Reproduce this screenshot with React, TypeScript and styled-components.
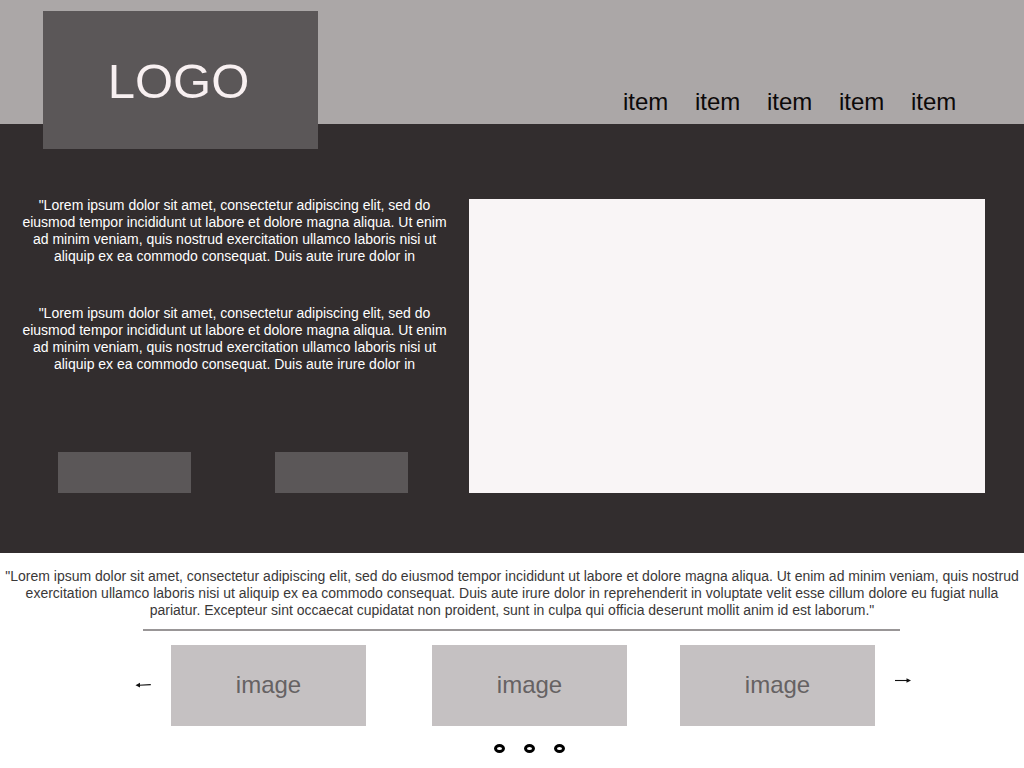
import React from "react";
import styled, { createGlobalStyle } from "styled-components";

const GlobalStyle = createGlobalStyle`
  * {
    box-sizing: border-box;
  }
  body {
    margin: 0;
    background: #ffffff;
    font-family: "Liberation Sans", Arial, sans-serif;
    font-size: 14px;
    line-height: 17px;
  }
  button {
    border: 0;
    padding: 0;
    background: none;
    font: inherit;
    cursor: pointer;
  }
`;

const Header = styled.header`
  display: flex;
  justify-content: space-between;
  align-items: flex-start;
  height: 124px;
  padding: 11px 41px 0 43px;
  background: #aba7a7;
`;

const Logo = styled.a`
  position: relative;
  display: flex;
  align-items: center;
  justify-content: center;
  width: 275px;
  height: 138px;
  padding: 2px 4px 0 0;
  background: #5b5758;
  color: #f8f0f1;
  font-size: 49px;
  line-height: 56px;
  text-decoration: none;
`;

const Nav = styled.nav`
  display: flex;
  padding-top: 77px;
`;

const NavLink = styled.a`
  width: 72px;
  color: #0c0909;
  font-size: 24px;
  line-height: 28px;
  text-decoration: none;
`;

const Hero = styled.section`
  display: grid;
  grid-template-columns: 469fr 516fr;
  padding: 73px 39px 60px 0;
  background: #322d2e;
`;

const Intro = styled.div`
  display: flex;
  flex-direction: column;
  gap: 40px;
  padding: 0 16px;
`;

const IntroText = styled.p`
  margin: 0;
  color: #ffffff;
  text-align: center;
`;

const Actions = styled.div`
  display: flex;
  justify-content: space-between;
  margin-top: auto;
  padding: 0 45px 0 42px;
`;

const ActionButton = styled.button`
  width: 133px;
  height: 41px;
  background: #5b5758;
`;

const Feature = styled.div`
  min-height: 294px;
  margin-top: 2px;
  background: #f9f5f6;
`;

const Summary = styled.p`
  margin: 0;
  padding: 15px 4px 10px;
  color: #3a3838;
  text-align: center;
`;

const Divider = styled.hr`
  height: 2px;
  margin: 0 124px 0 143px;
  border: 0;
  background: #999697;
`;

const Carousel = styled.section`
  display: flex;
  gap: 20px;
  padding: 14px 113px 0 135px;
`;

const ArrowButton = styled.button<{ $raised?: boolean }>`
  display: flex;
  align-items: center;
  width: 16px;
  padding-bottom: ${(p) => (p.$raised ? "12px" : "1px")};
`;

const Slides = styled.div`
  flex: 1;
  display: grid;
  grid-template-columns: 195fr 66fr 195fr 53fr 195fr;
`;

const Slide = styled.div<{ $column: number }>`
  grid-column: ${(p) => p.$column};
  display: flex;
  align-items: center;
  justify-content: center;
  height: 81px;
  padding-bottom: 2px;
  background: #c5c1c2;
  color: #666263;
  font-size: 24px;
  line-height: 28px;
`;

const Dots = styled.div`
  display: flex;
  justify-content: center;
  gap: 19px;
  padding: 18px 0 15px 35px;
`;

const Dot = styled.button`
  display: block;
  width: 11px;
  height: 9px;
`;

const introCopy =
  '"Lorem ipsum dolor sit amet, consectetur adipiscing elit, sed do eiusmod tempor incididunt ut labore et dolore magna aliqua. Ut enim ad minim veniam, quis nostrud exercitation ullamco laboris nisi ut aliquip ex ea commodo consequat. Duis aute irure dolor in';

const summaryCopy =
  '"Lorem ipsum dolor sit amet, consectetur adipiscing elit, sed do eiusmod tempor incididunt ut labore et dolore magna aliqua. Ut enim ad minim veniam, quis nostrud exercitation ullamco laboris nisi ut aliquip ex ea commodo consequat. Duis aute irure dolor in reprehenderit in voluptate velit esse cillum dolore eu fugiat nulla pariatur. Excepteur sint occaecat cupidatat non proident, sunt in culpa qui officia deserunt mollit anim id est laborum."';

export default function App() {
  return (
    <>
      <GlobalStyle />
      <Header>
        <Logo href="#">LOGO</Logo>
        <Nav>
          {[1, 2, 3, 4, 5].map((n) => (
            <NavLink key={n} href="#">
              item
            </NavLink>
          ))}
        </Nav>
      </Header>
      <main>
        <Hero>
          <Intro>
            <IntroText>{introCopy}</IntroText>
            <IntroText>{introCopy}</IntroText>
            <Actions>
              <ActionButton aria-label="First action" />
              <ActionButton aria-label="Second action" />
            </Actions>
          </Intro>
          <Feature />
        </Hero>
        <Summary>{summaryCopy}</Summary>
        <Divider />
        <Carousel>
          <ArrowButton aria-label="Previous">
            <svg width="16" height="6" viewBox="0 0 16 6">
              <path d="M4 3.2 L15.8 2.6" stroke="#111" strokeWidth="1.1" />
              <path d="M0.5 3.2 L5 0.8 L5 5.4 Z" fill="#111" />
            </svg>
          </ArrowButton>
          <Slides>
            {[1, 3, 5].map((column) => (
              <Slide key={column} $column={column}>
                image
              </Slide>
            ))}
          </Slides>
          <ArrowButton aria-label="Next" $raised>
            <svg width="16" height="6" viewBox="0 0 16 6">
              <path d="M0 3.5 H12" stroke="#111" strokeWidth="1.1" />
              <path d="M16 3.5 L11.5 1.2 L11.5 5.7 Z" fill="#111" />
            </svg>
          </ArrowButton>
        </Carousel>
        <Dots>
          {[1, 2, 3].map((n) => (
            <Dot key={n} aria-label={`Page ${n}`}>
              <svg width="11" height="9" viewBox="0 0 11 9" display="block">
                <ellipse cx="5.5" cy="4.5" rx="4" ry="3" fill="#fff" stroke="#000" strokeWidth="3" />
              </svg>
            </Dot>
          ))}
        </Dots>
      </main>
    </>
  );
}
